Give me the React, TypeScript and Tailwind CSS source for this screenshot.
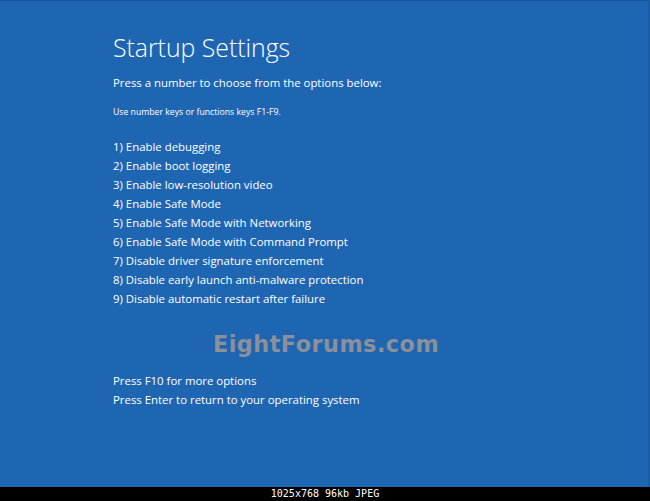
const OPTIONS = [
  '1) Enable debugging',
  '2) Enable boot logging',
  '3) Enable low-resolution video',
  '4) Enable Safe Mode',
  '5) Enable Safe Mode with Networking',
  '6) Enable Safe Mode with Command Prompt',
  '7) Disable driver signature enforcement',
  '8) Disable early launch anti-malware protection',
  '9) Disable automatic restart after failure',
];

export default function App() {
  return (
    <div className="w-[650px] h-[501px] flex flex-col bg-black overflow-hidden">
      {/* Screen */}
      <div className="flex-1 flex flex-col bg-[#1f66b2] border-t border-[#1b5599] border-r-2 border-r-[#1c5ca2] pl-[113px] text-white font-['Open_Sans',sans-serif]">
        <h1 className="mt-[30px] text-[24.8px] leading-[32px] font-light">Startup Settings</h1>
        <p className="mt-[10px] text-[11.4px] leading-[19px]">
          Press a number to choose from the options below:
        </p>
        <p className="mt-[13px] text-[8.7px] leading-[14px]">
          Use number keys or functions keys F1-F9.
        </p>

        <ul className="mt-[18px] flex flex-col">
          {OPTIONS.map((o) => (
            <li key={o} className="text-[11.4px] leading-[19px]">
              {o}
            </li>
          ))}
        </ul>

        {/* Watermark */}
        <div className="mt-[21px] pl-[100px] text-[22.3px] leading-[30px] font-bold text-[#8b909b] font-['DejaVu_Sans',sans-serif] tracking-[0.5px]">
          EightForums.com
        </div>

        <p className="mt-[12px] text-[11.4px] leading-[19px]">Press F10 for more options</p>
        <p className="text-[11.4px] leading-[19px]">
          Press Enter to return to your operating system
        </p>
      </div>

      {/* Image info bar */}
      <div className="h-[14px] flex items-center justify-center text-white text-[10px] leading-[14px] font-['DejaVu_Sans_Mono',monospace]">
        1025x768 96kb JPEG
      </div>
    </div>
  );
}
